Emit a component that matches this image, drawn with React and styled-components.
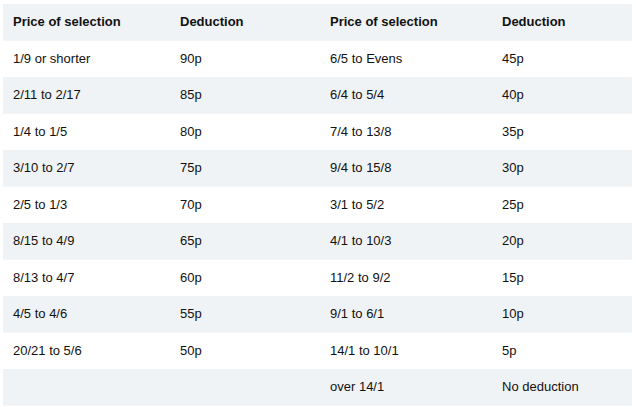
import React from "react";
import styled, { createGlobalStyle } from "styled-components";

const Global = createGlobalStyle`
  html, body { margin: 0; padding: 0; background: #fff; }
  body { font-family: "Liberation Sans", Arial, sans-serif; }
`;

const Wrap = styled.div`
  padding: 4px 4px 2px 3px;
`;

const Table = styled.table`
  width: 629px;
  border-collapse: separate;
  border-spacing: 0;
  table-layout: fixed;
  font-size: 13px;
  color: #111;
`;

const Row = styled.tr`
  height: 36.5px;
  background: ${(p) => (p.$shaded ? "#f0f3f6" : "#fff")};
`;

const Cell = styled.td`
  padding: 0 0 0 10px;
  vertical-align: middle;
  font-weight: ${(p) => (p.$head ? 700 : 400)};
  border-bottom: 1px solid ${(p) => (p.$shaded ? "#f4f6f8" : "#fff")};
  white-space: nowrap;
`;

const left = [
  ["1/9 or shorter", "90p"],
  ["2/11 to 2/17", "85p"],
  ["1/4 to 1/5", "80p"],
  ["3/10 to 2/7", "75p"],
  ["2/5 to 1/3", "70p"],
  ["8/15 to 4/9", "65p"],
  ["8/13 to 4/7", "60p"],
  ["4/5 to 4/6", "55p"],
  ["20/21 to 5/6", "50p"],
  ["", ""],
];

const right = [
  ["6/5 to Evens", "45p"],
  ["6/4 to 5/4", "40p"],
  ["7/4 to 13/8", "35p"],
  ["9/4 to 15/8", "30p"],
  ["3/1 to 5/2", "25p"],
  ["4/1 to 10/3", "20p"],
  ["11/2 to 9/2", "15p"],
  ["9/1 to 6/1", "10p"],
  ["14/1 to 10/1", "5p"],
  ["over 14/1", "No deduction"],
];

export default function App() {
  return (
    <Wrap>
      <Global />
      <Table>
        <colgroup>
          <col style={{ width: 167 }} />
          <col style={{ width: 150 }} />
          <col style={{ width: 172 }} />
          <col style={{ width: 140 }} />
        </colgroup>
        <tbody>
          <Row $shaded>
            <Cell $head $shaded>Price of selection</Cell>
            <Cell $head $shaded>Deduction</Cell>
            <Cell $head $shaded>Price of selection</Cell>
            <Cell $head $shaded>Deduction</Cell>
          </Row>
          {left.map((l, i) => {
            const r = right[i];
            const shaded = i % 2 === 1;
            return (
              <Row key={i} $shaded={shaded}>
                <Cell $shaded={shaded}>{l[0]}</Cell>
                <Cell $shaded={shaded}>{l[1]}</Cell>
                <Cell $shaded={shaded}>{r[0]}</Cell>
                <Cell $shaded={shaded}>{r[1]}</Cell>
              </Row>
            );
          })}
        </tbody>
      </Table>
    </Wrap>
  );
}
